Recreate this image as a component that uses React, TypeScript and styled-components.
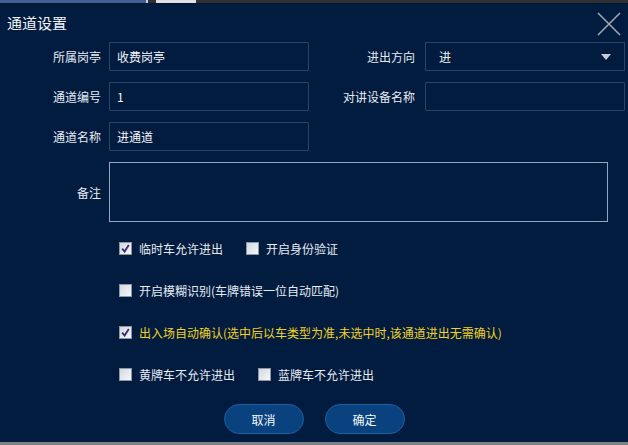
import React, { useState } from 'react';
import styled, { createGlobalStyle } from 'styled-components';

const GlobalStyle = createGlobalStyle`
  html, body {
    margin: 0;
    padding: 0;
    background: #3a3d42;
    font-family: "Microsoft YaHei", "Noto Sans CJK SC", "Liberation Sans", sans-serif;
  }
`;

/* ------------------------------ backdrop strip ----------------------------- */

const BackStrip = styled.div`
  display: flex;
  height: 3px;
  overflow: hidden;
  background: #2e3136;
`;

const BackTab = styled.div`
  width: 146px;
  background: #3b5f97;
  border-right: 2px solid #c9d2de;
`;

const BackLabel = styled.div`
  margin-left: 8px;
  width: 40px;
  background: #dfe3e8;
`;

/* --------------------------------- dialog --------------------------------- */

const Dialog = styled.div`
  background: #021c40;
  height: 439px;
  border-top: 1px solid #0c1424;
  box-sizing: border-box;
  color: #e8edf3;
  font-size: 12px;
`;

const TitleBar = styled.div`
  display: flex;
  align-items: center;
  justify-content: space-between;
  height: 36px;
  padding: 0 6px 0 7px;
`;

const Title = styled.div`
  font-size: 15px;
  color: #f0f3f7;
`;

const CloseButton = styled.button`
  width: 26px;
  height: 26px;
  padding: 0;
  border: 0;
  background: transparent;
  cursor: pointer;
  display: flex;
  align-items: center;
  justify-content: center;
  margin-top: 4px;
`;

const FormGrid = styled.div`
  display: grid;
  grid-template-columns: 101px 200px 100px 200px;
  grid-template-rows: 29px 29px 29px 60px;
  column-gap: 8px;
  row-gap: 11px;
  margin-top: 2px;
`;

const Label = styled.label<{ $right?: boolean }>`
  display: flex;
  align-items: center;
  justify-content: flex-end;
  white-space: nowrap;
  padding-right: ${p => (p.$right ? '2px' : '0')};
  color: #e6ebf2;
`;

const TextInput = styled.input`
  box-sizing: border-box;
  width: 100%;
  height: 29px;
  padding: 0 7px;
  background: #021c40;
  border: 1px solid #2b4366;
  border-radius: 1px;
  color: #f2f5f9;
  font: inherit;
  font-size: 12px;
  outline: none;
`;

const SelectBox = styled.div`
  box-sizing: border-box;
  height: 29px;
  display: flex;
  align-items: center;
  justify-content: space-between;
  padding: 0 13px 0 13px;
  border: 1px solid #2b4366;
  color: #f2f5f9;
  cursor: pointer;
`;

const Caret = styled.span`
  width: 0;
  height: 0;
  border-left: 5px solid transparent;
  border-right: 5px solid transparent;
  border-top: 6px solid #c6ccd4;
`;

const RemarkArea = styled.textarea`
  grid-column: 2 / 5;
  box-sizing: border-box;
  width: 499px;
  height: 60px;
  resize: none;
  background: #021c40;
  border: 1px solid #8ea7c8;
  color: #f2f5f9;
  font: inherit;
  outline: none;
`;

const Options = styled.div`
  display: flex;
  flex-direction: column;
  gap: 22px;
  padding-left: 119px;
  margin-top: 16px;
`;

const OptionRow = styled.div`
  display: flex;
  align-items: center;
  gap: 23px;
  height: 20px;
`;

const CheckItem = styled.label<{ $warn?: boolean }>`
  display: flex;
  align-items: center;
  gap: 7px;
  cursor: pointer;
  white-space: nowrap;
  color: ${p => (p.$warn ? '#f2d21c' : '#e6ebf2')};
`;

const Box = styled.span`
  box-sizing: border-box;
  width: 13px;
  height: 13px;
  border: 1px solid #8b96a6;
  background: linear-gradient(135deg, #d3d8df 0%, #f6f7f9 100%);
  display: flex;
  align-items: center;
  justify-content: center;
`;

const Footer = styled.div`
  display: flex;
  justify-content: center;
  gap: 21px;
  margin-top: 20px;
`;

const PillButton = styled.button`
  width: 80px;
  height: 30px;
  border-radius: 15px;
  border: 1px solid #1a5ea4;
  background: #0a427f;
  color: #f4f7fb;
  font: inherit;
  font-size: 12px;
  cursor: pointer;
`;

const BottomEdge = styled.div`
  height: 3px;
  background: #7d8186;
`;

/* -------------------------------- components ------------------------------- */

const Check = ({ label, init, warn }: { label: string; init?: boolean; warn?: boolean }) => {
  const [on, setOn] = useState(!!init);
  return (
    <CheckItem $warn={warn} onClick={() => setOn(!on)}>
      <Box>
        {on && (
          <svg width="9" height="9" viewBox="0 0 9 9">
            <path d="M1.2 4.6 L3.6 7.6 L7.8 1" fill="none" stroke="#3a2a7a" strokeWidth="1.8" />
          </svg>
        )}
      </Box>
      {label}
    </CheckItem>
  );
};

const App = () => {
  return (
    <>
      <GlobalStyle />
      <BackStrip>
        <BackTab />
        <BackLabel />
      </BackStrip>
      <Dialog>
        <TitleBar>
          <Title>通道设置</Title>
          <CloseButton aria-label="关闭">
            <svg width="24" height="24" viewBox="0 0 24 24">
              <path d="M1 1 L23 23 M23 1 L1 23" stroke="#9ea6b0" strokeWidth="1.6" />
            </svg>
          </CloseButton>
        </TitleBar>

        <FormGrid>
          <Label>所属岗亭</Label>
          <TextInput defaultValue="收费岗亭" />
          <Label $right>进出方向</Label>
          <SelectBox>
            <span>进</span>
            <Caret />
          </SelectBox>

          <Label>通道编号</Label>
          <TextInput defaultValue="1" />
          <Label $right>对讲设备名称</Label>
          <TextInput defaultValue="" />

          <Label>通道名称</Label>
          <TextInput defaultValue="进通道" />
          <span />
          <span />

          <Label>备注</Label>
          <RemarkArea />
        </FormGrid>

        <Options>
          <OptionRow>
            <Check label="临时车允许进出" init />
            <Check label="开启身份验证" />
          </OptionRow>
          <OptionRow>
            <Check label="开启模糊识别(车牌错误一位自动匹配)" />
          </OptionRow>
          <OptionRow>
            <Check label="出入场自动确认(选中后以车类型为准,未选中时,该通道进出无需确认)" init warn />
          </OptionRow>
          <OptionRow>
            <Check label="黄牌车不允许进出" />
            <Check label="蓝牌车不允许进出" />
          </OptionRow>
        </Options>

        <Footer>
          <PillButton>取消</PillButton>
          <PillButton>确定</PillButton>
        </Footer>
      </Dialog>
      <BottomEdge />
    </>
  );
};

export default App;
